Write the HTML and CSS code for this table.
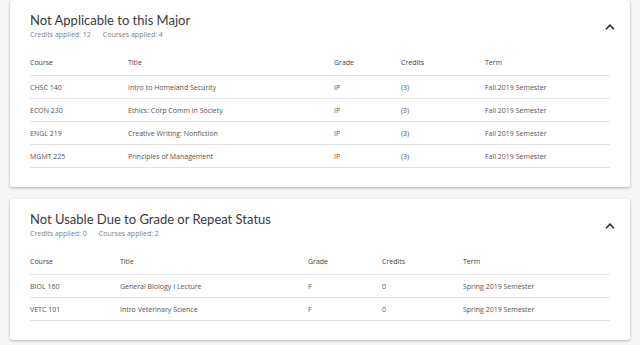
FILE: index.html
```html
<!DOCTYPE html>
<html>
<head>
<meta charset="utf-8">
<link rel="stylesheet" href="styles.css">
</head>
<body>
<section class="card">
  <div class="card-head">
    <div>
      <h2 class="title">Not Applicable to this Major</h2>
      <p class="meta"><span>Credits applied: 12</span><span>Courses applied: 4</span></p>
    </div>
    <svg class="chevron" width="10" height="6" viewBox="0 0 10 6"><polyline points="1,5.2 5,1.2 9,5.2" fill="none" stroke="#2b2b2b" stroke-width="1.6"/></svg>
  </div>
  <table class="courses t1">
    <colgroup><col class="c1"><col class="c2"><col class="c3"><col class="c4"><col class="c5"></colgroup>
    <thead><tr><th>Course</th><th>Title</th><th>Grade</th><th>Credits</th><th>Term</th></tr></thead>
    <tbody>
      <tr><td>CHSC 140</td><td>Intro to Homeland Security</td><td>IP</td><td>(3)</td><td>Fall 2019 Semester</td></tr>
      <tr><td>ECON 230</td><td>Ethics: Corp Comm in Society</td><td>IP</td><td>(3)</td><td>Fall 2019 Semester</td></tr>
      <tr><td>ENGL 219</td><td>Creative Writing: Nonfiction</td><td>IP</td><td>(3)</td><td>Fall 2019 Semester</td></tr>
      <tr><td>MGMT 225</td><td>Principles of Management</td><td>IP</td><td>(3)</td><td>Fall 2019 Semester</td></tr>
    </tbody>
  </table>
</section>
<section class="card">
  <div class="card-head">
    <div>
      <h2 class="title">Not Usable Due to Grade or Repeat Status</h2>
      <p class="meta"><span>Credits applied: 0</span><span>Courses applied: 2</span></p>
    </div>
    <svg class="chevron" width="10" height="6" viewBox="0 0 10 6"><polyline points="1,5.2 5,1.2 9,5.2" fill="none" stroke="#2b2b2b" stroke-width="1.6"/></svg>
  </div>
  <table class="courses t2">
    <colgroup><col class="c1"><col class="c2"><col class="c3"><col class="c4"><col class="c5"></colgroup>
    <thead><tr><th>Course</th><th>Title</th><th>Grade</th><th>Credits</th><th>Term</th></tr></thead>
    <tbody>
      <tr><td>BIOL 160</td><td>General Biology I Lecture</td><td>F</td><td>0</td><td>Spring 2019 Semester</td></tr>
      <tr><td>VETC 101</td><td>Intro Veterinary Science</td><td>F</td><td>0</td><td>Spring 2019 Semester</td></tr>
    </tbody>
  </table>
</section>
</body>
</html>
```

FILE: styles.css
```css
html, body {
  margin: 0;
  padding: 0;
  background: #f6f6f6;
}
body {
  padding: 0 10px;
  font-family: "Open Sans", "Liberation Sans", sans-serif;
  color: #555;
}
.card {
  background: #fff;
  border-radius: 3px;
  box-shadow: 0 1px 3px rgba(0, 0, 0, 0.28);
  padding: 11px 20px 19px;
  margin-bottom: 12px;
}
.card-head {
  display: flex;
  justify-content: space-between;
  align-items: flex-start;
}
.title {
  margin: 0;
  font-family: Lato, "Open Sans", sans-serif;
  font-weight: 400;
  font-size: 13px;
  line-height: 18px;
  color: #3a3a3a;
}
.meta {
  margin: 1px 0 0;
  font-size: 7px;
  line-height: 10px;
  color: #808080;
  display: flex;
  gap: 12px;
}
.chevron {
  margin-top: 13px;
  margin-right: -5px;
  display: block;
}
.courses {
  width: 100%;
  margin-top: 13px;
  border-collapse: collapse;
  table-layout: fixed;
  font-size: 7px;
}
.courses th {
  font-weight: 400;
  color: #444;
  text-align: left;
  height: 18px;
  padding: 0 0 4px;
  vertical-align: middle;
  border-bottom: 1px solid #e3e3e3;
}
.courses td {
  height: 22px;
  padding: 0;
  vertical-align: middle;
  border-bottom: 1px solid #e3e3e3;
  color: #555;
  white-space: nowrap;
}
.t1 .c1 { width: 98px; }
.t1 .c2 { width: 206px; }
.t1 .c3 { width: 67px; }
.t1 .c4 { width: 84px; }
.t1 .c5 { width: 125px; }
.t2 .c1 { width: 90px; }
.t2 .c2 { width: 188px; }
.t2 .c3 { width: 74px; }
.t2 .c4 { width: 81px; }
.t2 .c5 { width: 147px; }
```
